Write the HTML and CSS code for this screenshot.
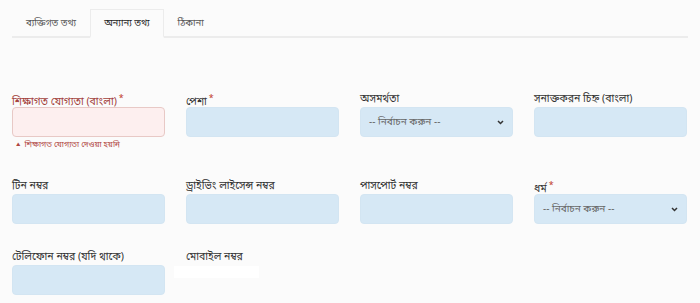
FILE: index.html
```html
<!DOCTYPE html>
<html lang="bn">
<head>
<meta charset="utf-8">
<title>অন্যান্য তথ্য</title>
<link rel="stylesheet" href="styles.css">
</head>
<body>
<div class="page">
  <ul class="tabs">
    <li class="tab">ব্যক্তিগত তথ্য</li>
    <li class="tab active">অন্যান্য তথ্য</li>
    <li class="tab">ঠিকানা</li>
  </ul>

  <div class="form">
    <div class="field has-error">
      <label class="label">শিক্ষাগত যোগ্যতা (বাংলা)<span class="req">*</span></label>
      <div class="input error"></div>
      <div class="error-msg"><span class="tri">▲</span>শিক্ষাগত যোগ্যতা দেওয়া হয়নি</div>
    </div>
    <div class="field">
      <label class="label">পেশা<span class="req">*</span></label>
      <div class="input"></div>
    </div>
    <div class="field">
      <label class="label">অসমর্থতা</label>
      <div class="input select"><span>-- নির্বাচন করুন --</span>
        <svg class="chev" width="7" height="5" viewBox="0 0 7 5"><path d="M1 1 L3.5 3.5 L6 1" fill="none" stroke="#333" stroke-width="1.5"/></svg>
      </div>
    </div>
    <div class="field">
      <label class="label">সনাক্তকরন চিহ্ন (বাংলা)</label>
      <div class="input"></div>
    </div>

    <div class="field">
      <label class="label">টিন নম্বর</label>
      <div class="input"></div>
    </div>
    <div class="field">
      <label class="label">ড্রাইভিং লাইসেন্স নম্বর</label>
      <div class="input"></div>
    </div>
    <div class="field">
      <label class="label">পাসপোর্ট নম্বর</label>
      <div class="input"></div>
    </div>
    <div class="field">
      <label class="label">ধর্ম<span class="req">*</span></label>
      <div class="input select"><span>-- নির্বাচন করুন --</span>
        <svg class="chev" width="7" height="5" viewBox="0 0 7 5"><path d="M1 1 L3.5 3.5 L6 1" fill="none" stroke="#333" stroke-width="1.5"/></svg>
      </div>
    </div>

    <div class="field">
      <label class="label">টেলিফোন নম্বর (যদি থাকে)</label>
      <div class="input"></div>
    </div>
    <div class="field">
      <label class="label">মোবাইল নম্বর</label>
      <div class="blank"></div>
    </div>
  </div>
</div>
</body>
</html>
```

FILE: styles.css
```css
* { box-sizing: border-box; }
html, body { margin: 0; padding: 0; }
body {
  background: #fbfbfb;
  font-family: "Noto Sans Bengali", "Noto Sans", "Lohit Bengali", "FreeSans", sans-serif;
  color: #333;
  width: 700px;
  height: 303px;
  overflow: hidden;
}
.page { padding: 9px 12px 0 12px; }
.tabs {
  list-style: none;
  margin: 0;
  padding: 0;
  display: flex;
  border-bottom: 2px solid #ececec;
  width: 676px;
}
.tab {
  font-size: 9.5px;
  line-height: 28px;
  height: 29px;
  padding: 0 13px;
  color: #555;
  margin-bottom: -2px;
  border: 1px solid transparent;
}
.tab.active {
  color: #222;
  background: #fbfbfb;
  border: 1px solid #ececec;
  border-bottom: 2px solid #fbfbfb;
}
.form {
  margin-top: 51px;
  display: grid;
  grid-template-columns: repeat(4, 153px);
  column-gap: 21px;
  row-gap: 23px;
  align-items: start;
}
.field { display: flex; flex-direction: column; }
.label {
  font-size: 10.5px;
  line-height: 15px;
  height: 18px;
  padding-top: 3px;
  color: #333;
  white-space: nowrap;
}
.req { color: #c0392b; font-size: 9px; vertical-align: 4px; margin-left: 2px; }
.has-error .label { color: #a3423c; }
.input {
  height: 30px;
  border-radius: 4px;
  background: #d6e8f5;
  border: 1px solid #d3e5f2;
}
.input.error {
  background: #fdefef;
  border: 1px solid #e8c9c6;
}
.error-msg {
  font-size: 8px;
  line-height: 16px;
  height: 16px;
  color: #b0463f;
  padding-left: 4px;
}
.tri { font-size: 5px; vertical-align: 1px; margin-right: 4px; }
.select {
  display: flex;
  align-items: center;
  justify-content: space-between;
  padding: 0 8px 0 8px;
  font-size: 10px;
  color: #666;
}
.chev { display: block; }
.blank {
  width: 85px;
  height: 12px;
  margin-left: -12px;
  margin-top: 1px;
  background: #ffffff;
}
```
